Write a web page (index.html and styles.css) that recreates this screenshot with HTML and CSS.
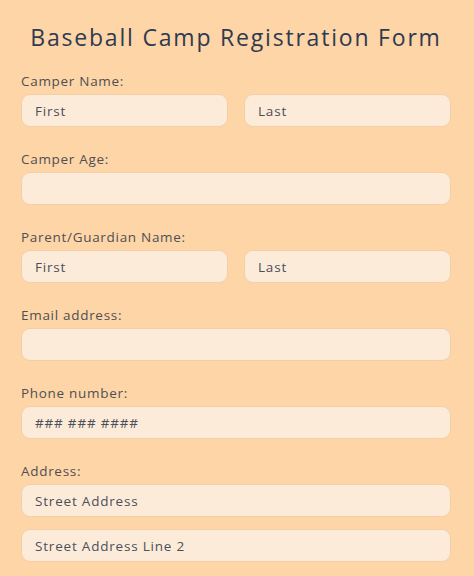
FILE: index.html
```html
<!DOCTYPE html>
<html lang="en">
<head>
    <meta charset="UTF-8">
    <meta name="viewport" content="width=device-width, initial-scale=1.0">
    <title>Baseball Camp Registration Form</title>
    <link rel="stylesheet" href="styles.css">
</head>
<body>
    <form class="form">
        <h1>Baseball Camp Registration Form</h1>

        <div class="field">
            <label>Camper Name:</label>
            <div class="row">
                <input type="text" placeholder="First">
                <input type="text" placeholder="Last">
            </div>
        </div>

        <div class="field">
            <label>Camper Age:</label>
            <input type="text">
        </div>

        <div class="field">
            <label>Parent/Guardian Name:</label>
            <div class="row">
                <input type="text" placeholder="First">
                <input type="text" placeholder="Last">
            </div>
        </div>

        <div class="field">
            <label>Email address:</label>
            <input type="email">
        </div>

        <div class="field">
            <label>Phone number:</label>
            <input type="tel" placeholder="### ### ####">
        </div>

        <div class="field">
            <label>Address:</label>
            <div class="stack">
                <input type="text" placeholder="Street Address">
                <input type="text" placeholder="Street Address Line 2">
            </div>
        </div>
    </form>
</body>
</html>
```

FILE: styles.css
```css
* {
    margin: 0;
    padding: 0;
    box-sizing: border-box;
}
body {
    background: #fed5a6;
    font-family: "Open Sans", "Liberation Sans", sans-serif;
    overflow: hidden;
}
.form {
    width: 430px;
    margin-left: 21px;
}
h1 {
    font-weight: 400;
    font-size: 23px;
    line-height: 28px;
    color: #2e3a51;
    text-align: center;
    letter-spacing: 1.8px;
    padding: 23px 0 22px;
    white-space: nowrap;
}
.field {
    margin-bottom: 24px;
}
label {
    display: block;
    font-size: 13.5px;
    line-height: 16px;
    color: #4f4f55;
    letter-spacing: 0.7px;
    margin-bottom: 5px;
}
.row {
    display: flex;
    gap: 16px;
}
.stack {
    display: flex;
    flex-direction: column;
    gap: 12px;
}
input {
    display: block;
    width: 100%;
    height: 33px;
    background: #fdebda;
    border: 1px solid #f2cfa6;
    border-radius: 9px;
    padding: 0 13px;
    font-family: inherit;
    font-size: 13.5px;
    letter-spacing: 0.8px;
    color: #4b4f5a;
}
.row input {
    flex: 1;
    min-width: 0;
}
input::placeholder {
    color: #4b4f5a;
}
```
